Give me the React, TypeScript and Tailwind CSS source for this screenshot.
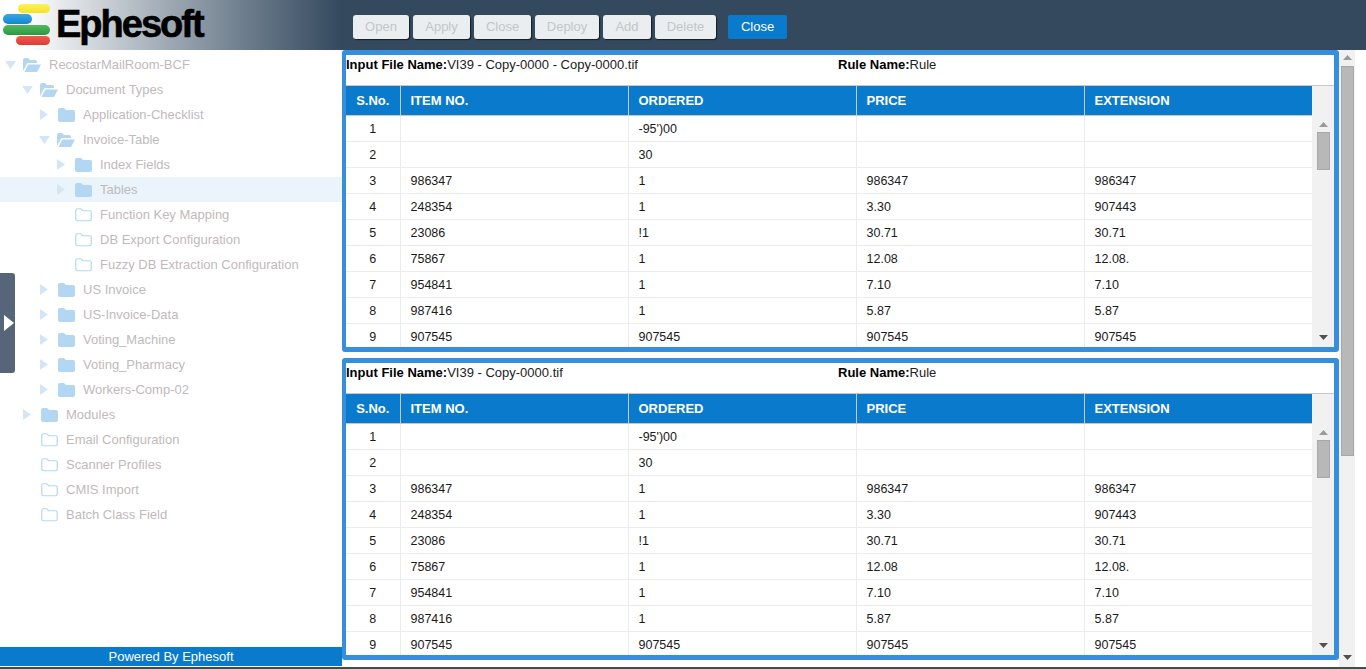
import type { ReactNode } from "react";

type TreeRow = {
	label: string;
	level: number;
	arrow?: "open" | "closed";
	icon: "open" | "filled" | "outline";
	active?: boolean;
};

const treeRows: TreeRow[] = [
	{ label: "RecostarMailRoom-BCF", level: 0, arrow: "open", icon: "open" },
	{ label: "Document Types", level: 1, arrow: "open", icon: "open" },
	{ label: "Application-Checklist", level: 2, arrow: "closed", icon: "filled" },
	{ label: "Invoice-Table", level: 2, arrow: "open", icon: "open" },
	{ label: "Index Fields", level: 3, arrow: "closed", icon: "filled" },
	{ label: "Tables", level: 3, arrow: "closed", icon: "filled", active: true },
	{ label: "Function Key Mapping", level: 3, icon: "outline" },
	{ label: "DB Export Configuration", level: 3, icon: "outline" },
	{ label: "Fuzzy DB Extraction Configuration", level: 3, icon: "outline" },
	{ label: "US Invoice", level: 2, arrow: "closed", icon: "filled" },
	{ label: "US-Invoice-Data", level: 2, arrow: "closed", icon: "filled" },
	{ label: "Voting_Machine", level: 2, arrow: "closed", icon: "filled" },
	{ label: "Voting_Pharmacy", level: 2, arrow: "closed", icon: "filled" },
	{ label: "Workers-Comp-02", level: 2, arrow: "closed", icon: "filled" },
	{ label: "Modules", level: 1, arrow: "closed", icon: "filled" },
	{ label: "Email Configuration", level: 1, icon: "outline" },
	{ label: "Scanner Profiles", level: 1, icon: "outline" },
	{ label: "CMIS Import", level: 1, icon: "outline" },
	{ label: "Batch Class Field", level: 1, icon: "outline" },
];

const levelPadding = ["pl-[5px]", "pl-[22px]", "pl-[39px]", "pl-[56px]"];

const rows = [
	["1", "", "-95')00", "", ""],
	["2", "", "30", "", ""],
	["3", "986347", "1", "986347", "986347"],
	["4", "248354", "1", "3.30", "907443"],
	["5", "23086", "!1", "30.71", "30.71"],
	["6", "75867", "1", "12.08", "12.08."],
	["7", "954841", "1", "7.10", "7.10"],
	["8", "987416", "1", "5.87", "5.87"],
	["9", "907545", "907545", "907545", "907545"],
];

const toolbarButtons = [
	{ label: "Open", width: "w-[56px]" },
	{ label: "Apply", width: "w-[57px]" },
	{ label: "Close", width: "w-[57px]" },
	{ label: "Deploy", width: "w-[64px]" },
	{ label: "Add", width: "w-[48px]" },
	{ label: "Delete", width: "w-[61px]" },
];

function FolderIcon({ kind }: { kind: TreeRow["icon"] }) {
	if (kind === "open") {
		return (
			<svg width="19" height="16" viewBox="0 0 19 16" className="shrink-0">
				<path d="M1 14V3q0-2 2-2h3l2 2h5q2 0 2 2v1H5.500L1 14Z" fill="#b3d7f3" />
				<path d="M2.500 15 6.300 7.500H19L15 15Z" fill="#b3d7f3" />
			</svg>
		);
	}
	if (kind === "filled") {
		return (
			<svg width="17" height="16" viewBox="0 0 17 16" className="ml-[2px] shrink-0">
				<path d="M0 3q0-2 2-2h4l2 2h7q2 0 2 2v8q0 2-2 2H2q-2 0-2-2Z" fill="#b3d7f3" />
			</svg>
		);
	}
	return (
		<svg width="17" height="16" viewBox="0 0 17 16" className="ml-[2px] shrink-0">
			<path
				d="M.75 3.500q0-1.750 1.750-1.750h3.200l2 2h6.800q1.750 0 1.750 1.750v6.500q0 1.750-1.750 1.750H2.500q-1.750 0-1.750-1.750Z"
				fill="none"
				stroke="#b3d7f3"
				strokeWidth="1.200"
			/>
		</svg>
	);
}

function TreeArrow({ kind }: { kind?: TreeRow["arrow"] }) {
	return (
		<span className="flex w-[17px] shrink-0 justify-start">
			{kind === "open" && (
				<svg width="11" height="8" viewBox="0 0 11 8">
					<path d="M0 0h11L5.500 8Z" fill="#d3e6f6" />
				</svg>
			)}
			{kind === "closed" && (
				<svg width="8" height="11" viewBox="0 0 8 11" className="ml-[1px]">
					<path d="M0 0v11l8-5.500Z" fill="#d3e6f6" />
				</svg>
			)}
		</span>
	);
}

function Tree() {
	return (
		<div className="flex flex-col pt-[2px]">
			{treeRows.map((row) => (
				<div
					key={row.label}
					className={`flex h-[25px] items-center ${levelPadding[row.level]} ${row.active ? "bg-[#ebf4fb]" : ""}`}
				>
					<TreeArrow kind={row.arrow} />
					<FolderIcon kind={row.icon} />
					<span className="ml-[8px] whitespace-nowrap text-[13px] text-[#bfbabc]">
						{row.label}
					</span>
				</div>
			))}
		</div>
	);
}

function Logo() {
	return (
		<div className="flex h-[50px] items-start pt-[4px] pl-[3px]">
			<div className="flex w-[50px] shrink-0 flex-col gap-[1px]">
				<span className="ml-[15px] h-[9px] w-[32px] rounded-full bg-gradient-to-b from-[#fbf25a] to-[#f2e41c]" />
				<span className="h-[10px] w-[29px] rounded-full bg-gradient-to-b from-[#35a9e6] to-[#1586cc]" />
				<span className="h-[10px] w-[47px] rounded-full bg-gradient-to-b from-[#52bb62] to-[#2a983f]" />
				<span className="ml-[13px] h-[9px] w-[34px] rounded-full bg-gradient-to-b from-[#f05a4e] to-[#dd3a30]" />
			</div>
			<span className="mt-[-2px] ml-[3px] text-[38px] leading-[44px] font-bold tracking-[-2px] text-black [-webkit-text-stroke:0.600px_black]">
				Ephesoft
			</span>
		</div>
	);
}

function Toolbar() {
	return (
		<div className="flex items-start gap-[4px] pt-[15px] pl-[11px]">
			{toolbarButtons.map((button) => (
				<button
					key={button.label}
					type="button"
					disabled
					className={`h-[24px] rounded-[3px] bg-[#ebeef0] text-center text-[13px] text-[#c3c5c7] shadow-[1px_1px_1px_rgba(0,0,0,0.6)] ${button.width}`}
				>
					{button.label}
				</button>
			))}
			<button
				type="button"
				className="ml-[8px] h-[24px] w-[59px] rounded-[2px] bg-[#0a7acc] text-center text-[13px] text-white"
			>
				Close
			</button>
		</div>
	);
}

function ScrollArrow({ dir }: { dir: "up" | "down" }) {
	return (
		<svg width="9" height="5" viewBox="0 0 9 5">
			<path d={dir === "up" ? "M0 5h9L4.500 0Z" : "M0 0h9L4.500 5Z"} fill={dir === "up" ? "#9a9a9a" : "#505050"} />
		</svg>
	);
}

function Scrollbar({ children, className }: { children: ReactNode; className: string }) {
	return <div className={`flex flex-col items-center bg-[#f1f1f1] ${className}`}>{children}</div>;
}

function ResultPanel({ fileName }: { fileName: string }) {
	return (
		<section className="flex h-[302px] flex-col rounded-[3px] border-[5px] border-l-[4px] border-[#368fdd] bg-white">
			<div className="flex h-[31px] shrink-0 border-b border-[#c8c8c8] pt-[1px] text-[13px] leading-[17px] text-[#222]">
				<p className="w-[492px]">
					<b className="text-black">Input File Name:</b>
					{fileName}
				</p>
				<p>
					<b className="text-black">Rule Name:</b>Rule
				</p>
			</div>
			<div className="flex min-h-0 flex-1">
				<div className="min-w-0 flex-1 overflow-hidden">
					<table className="w-[966px] table-fixed border-collapse text-[12.500px] text-[#1a1a1a]">
						<colgroup>
							<col className="w-[54px]" />
							<col className="w-[228px]" />
							<col className="w-[228px]" />
							<col className="w-[228px]" />
							<col className="w-[228px]" />
						</colgroup>
						<thead>
							<tr className="h-[29px] border-b border-[#c8c8c8] bg-[#0a7acc] text-[13px] font-bold text-white">
								<th className="text-center">S.No.</th>
								{["ITEM NO.", "ORDERED", "PRICE", "EXTENSION"].map((title) => (
									<th key={title} className="border-l border-[#c8c8c8] pl-[10px] text-left">
										{title}
									</th>
								))}
							</tr>
						</thead>
						<tbody>
							{rows.map((row) => (
								<tr key={row[0]} className="h-[26px] border-b border-[#ececec]">
									<td className="pt-[2px] text-center">{row[0]}</td>
									{row.slice(1).map((cell, index) => (
										<td key={index} className="border-l border-[#ececec] pt-[2px] pl-[10px]">
											{cell}
										</td>
									))}
								</tr>
							))}
						</tbody>
					</table>
				</div>
				<Scrollbar className="w-[22px] shrink-0 pt-[36px] pb-[7px]">
					<ScrollArrow dir="up" />
					<div className="mt-[5px] h-[38px] w-[13px] border border-[#a8a8a8] bg-[#b8b8b8]" />
					<div className="flex-1" />
					<ScrollArrow dir="down" />
				</Scrollbar>
			</div>
		</section>
	);
}

export default function App() {
	return (
		<div className="relative flex h-[669px] w-[1366px] flex-col overflow-hidden bg-white font-['Liberation_Sans',Arial,sans-serif]">
			<header className="flex h-[50px] shrink-0 bg-[#34495e]">
				<div className="w-[342px] shrink-0 bg-gradient-to-r from-white from-[8%] to-[#34495e]">
					<Logo />
				</div>
				<Toolbar />
			</header>
			<div className="flex min-h-0 flex-1">
				<aside className="flex w-[342px] shrink-0 flex-col">
					<div className="flex-1">
						<Tree />
					</div>
					<footer className="mb-[1px] h-[19px] bg-[#0a7acc] text-center text-[13px] leading-[19px] text-white">
						Powered By Ephesoft
					</footer>
				</aside>
				<main className="flex w-[997px] shrink-0 flex-col gap-[6px]">
					<ResultPanel fileName="VI39 - Copy-0000 - Copy-0000.tif" />
					<ResultPanel fileName="VI39 - Copy-0000.tif" />
				</main>
				<Scrollbar className="w-[16px] shrink-0 pt-[5px]">
					<ScrollArrow dir="up" />
					<div className="mt-[6px] h-[390px] w-[13px] border border-[#a8a8a8] bg-[#b8b8b8]" />
					<div className="flex-1" />
					<div className="pb-[7px]">
						<ScrollArrow dir="down" />
					</div>
				</Scrollbar>
			</div>
			<div className="h-[2px] shrink-0 bg-[#4a4a4a]" />
			<div className="absolute top-[273px] left-0 flex h-[100px] w-[15px] items-center rounded-r-[3px] bg-[#566577] pl-[4px]">
				<svg width="10" height="16" viewBox="0 0 10 16">
					<path d="M0 0v16l10-8Z" fill="#fff" />
				</svg>
			</div>
		</div>
	);
}
